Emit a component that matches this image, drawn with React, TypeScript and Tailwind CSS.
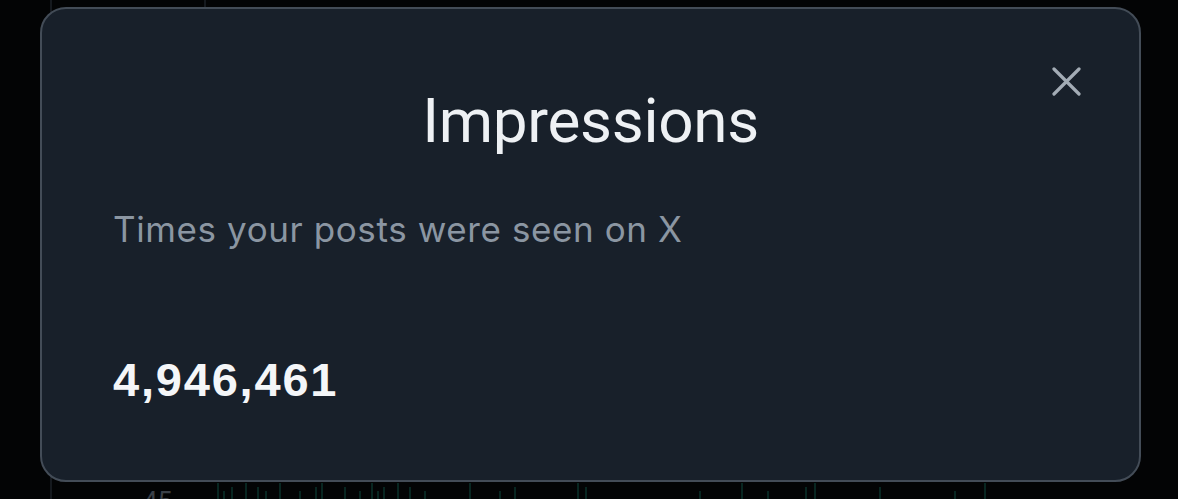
const bars = [218, 224, 232, 246, 258, 266, 280, 300, 316, 322, 345, 360, 372, 378, 384, 398, 410, 425, 470, 500, 515, 578, 586, 700, 742, 768, 806, 815, 880, 955, 985];

function BackdropChart() {
  return (
    <svg className="absolute inset-0" width="1178" height="499" viewBox="0 0 1178 499">
      <line x1="51" y1="0" x2="51" y2="499" stroke="#1c2127" strokeWidth="1.5" />
      <line x1="205" y1="0" x2="205" y2="8" stroke="#1c2127" strokeWidth="1.5" />
      {bars.map((x, i) => (
        <line key={x} x1={x} y1={499 - (i % 3 === 0 ? 16 : i % 2 === 0 ? 12 : 8)} x2={x} y2="499" stroke="#0c3a32" strokeWidth="1.3" />
      ))}
      <text x="143" y="510" fill="#3a4048" fontSize="26" fontFamily="Roboto, sans-serif">45</text>
    </svg>
  );
}

export default function App() {
  return (
    <div className="relative w-[1178px] h-[499px] bg-[#030405] pt-[7px] pl-[40px] overflow-hidden">
      <BackdropChart />
      <div className="relative w-[1101px] h-[475px] rounded-[26px] border-2 border-[#434c57] bg-[#18202a] px-[71px] font-['Roboto',sans-serif]">
        <button className="absolute right-[58px] top-[58px] text-[#a3acb5]">
          <svg width="29" height="29" viewBox="0 0 29 29" fill="none" stroke="currentColor" strokeWidth="3.2" strokeLinecap="round">
            <path d="M2 2L27 27M27 2L2 27" />
          </svg>
        </button>
        <h2 className="pt-[77px] text-center text-[62px] leading-[70px] font-normal text-[#eef1f4] tracking-[-0.3px]">
          Impressions
        </h2>
        <p className="mt-[51px] font-['Inter',sans-serif] text-[35px] leading-[44px] text-[#8b96a2] tracking-[0.6px]">
          Times your posts were seen on X
        </p>
        <p className="mt-[101px] font-['Liberation_Sans',sans-serif] font-bold text-[47px] leading-[56px] text-[#f4f6f8] tracking-[1.8px]">
          4,946,461
        </p>
      </div>
    </div>
  );
}
